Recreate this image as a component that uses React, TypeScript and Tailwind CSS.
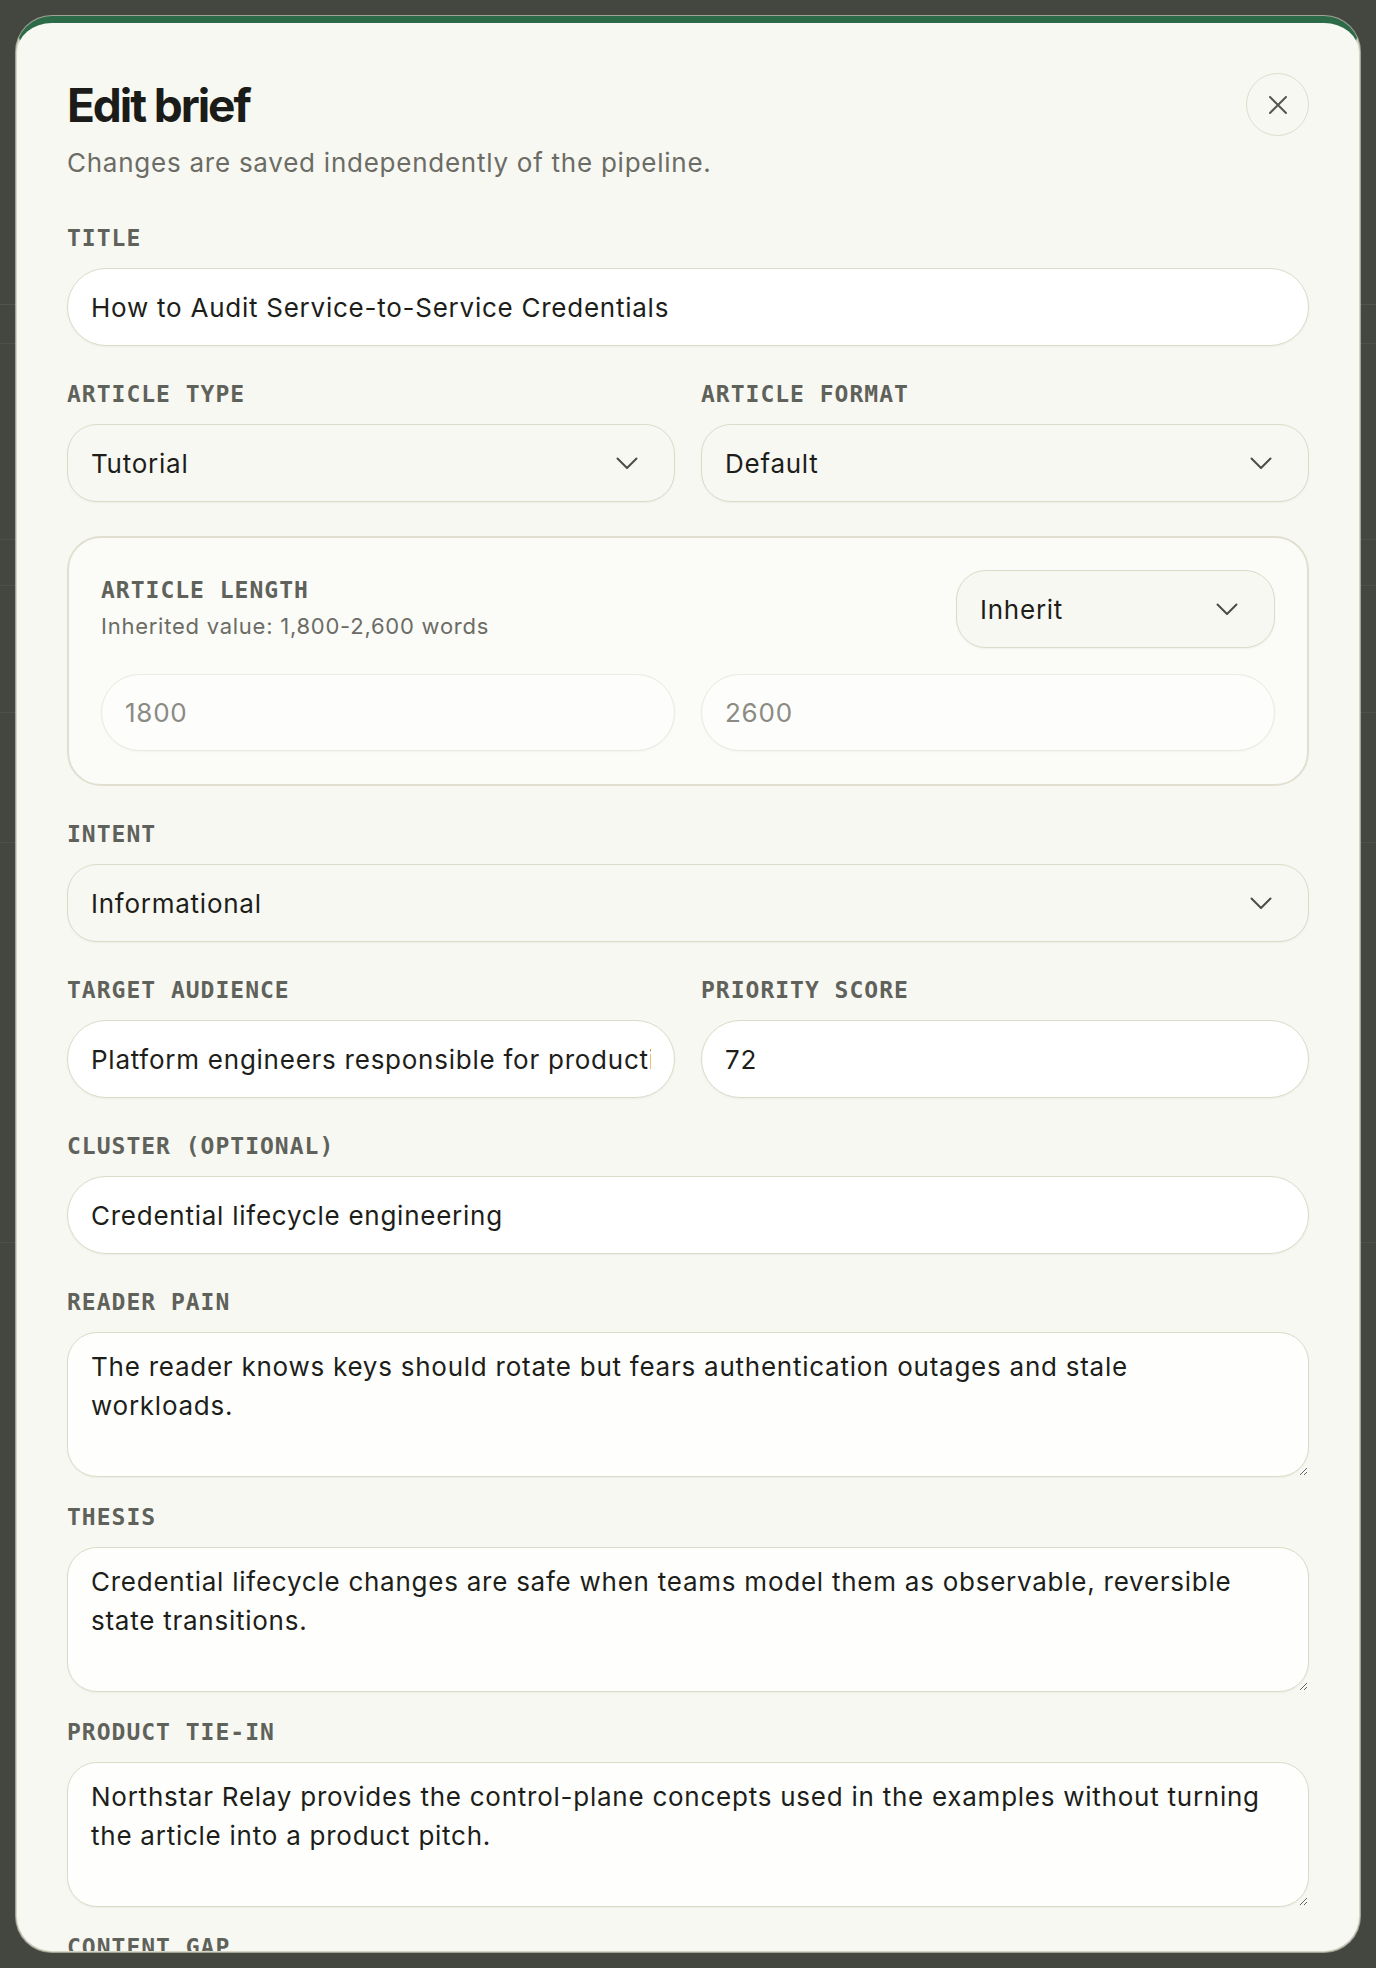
import React, { useState } from 'react';

const sans = "font-['Inter',sans-serif]";
const labelCls =
  "block font-['DejaVu_Sans_Mono',monospace] text-[23px] leading-[28px] font-bold uppercase tracking-[1px] text-[#5f625a]";
const inputCls =
  'h-[78px] w-full rounded-full border-[1.5px] border-[#dcdbc8] bg-white px-[23px] text-[26px] text-[#1d1e1a] shadow-[0_1px_2px_rgba(60,60,40,0.06)] outline-none';
const areaCls =
  'block h-[145px] w-full resize-y rounded-[30px] border-[1.5px] border-[#dcdbc8] bg-[#fefefd] pl-[23px] pr-[36px] pt-[14px] text-[26px] leading-[39px] text-[#1d1e1a] shadow-[0_1px_2px_rgba(60,60,40,0.06)] outline-none';
const rangeCls =
  'h-[77px] w-full rounded-full border-[1.5px] border-[#ebeae0] bg-[#fdfdfb] px-[23px] text-[26px] text-[#1d1e1a] shadow-[0_1px_2px_rgba(60,60,40,0.04)] outline-none placeholder:text-[#8b8b84]';

function Chevron() {
  return (
    <svg width="22" height="13" viewBox="0 0 22 13" fill="none" className="shrink-0">
      <polyline points="1.5,1.5 11,11 20.5,1.5" stroke="#4b4d46" strokeWidth="2" strokeLinecap="round" strokeLinejoin="round" />
    </svg>
  );
}

function Select({ value, className = '' }: { value: string; className?: string }) {
  return (
    <button
      type="button"
      className={`flex h-[78px] items-center justify-between rounded-[30px] border-[1.5px] border-[#dcdbc8] bg-[#f8f8f3] pl-[23px] pr-[36px] text-left text-[26px] text-[#1d1e1a] shadow-[0_1px_2px_rgba(60,60,40,0.06)] ${className}`}
    >
      <span>{value}</span>
      <Chevron />
    </button>
  );
}

function Field({ label, children, className = '' }: { label: string; children: React.ReactNode; className?: string }) {
  return (
    <div className={`flex flex-col gap-[16px] ${className}`}>
      <label className={labelCls}>{label}</label>
      {children}
    </div>
  );
}

export default function App() {
  const [brief, setBrief] = useState({
    title: 'How to Audit Service-to-Service Credentials',
    audience: 'Platform engineers responsible for production service identity',
    priority: '72',
    cluster: 'Credential lifecycle engineering',
    pain: 'The reader knows keys should rotate but fears authentication outages and stale workloads.',
    thesis:
      'Credential lifecycle changes are safe when teams model them as observable, reversible state transitions.',
    tieIn:
      'Northstar Relay provides the control-plane concepts used in the examples without turning the article into a product pitch.',
    gap: 'Most guides stop at rotation schedules and skip dependency mapping between services.'
  });

  const set = (key: keyof typeof brief) => (e: React.ChangeEvent<HTMLInputElement | HTMLTextAreaElement>) =>
    setBrief((prev) => ({ ...prev, [key]: e.target.value }));

  return (
    <div className={`relative min-h-[1968px] overflow-hidden bg-[#44473f] tracking-[0.75px] ${sans}`}>
      {/* page behind the dialog, dimmed */}
      <div className="flex flex-col opacity-60">
        <div className="h-[305px] border-b border-[#5a5d54]" />
        <div className="h-[39px] border-b border-[#55584f]" />
        <div className="h-[196px] border-b border-[#55584f]" />
        <div className="h-[46px] border-b border-[#55584f]" />
        <div className="h-[127px] border-b border-[#55584f]" />
        <div className="h-[130px] border-b border-[#55584f]" />
        <div className="h-[400px] border-b border-[#55584f]" />
      </div>

      <div className="absolute inset-4 overflow-hidden rounded-[36px] border border-t-[7px] border-[#d5d5c4] border-t-[#2d6a47] bg-[#f8f8f3] px-[50px] pt-[50px] shadow-[0_0_0_1px_rgba(225,225,210,0.6)]">
        <div className="flex items-start justify-between">
          <div className="pt-[5px]">
            <h2 className="text-[46px] font-bold leading-[55px] tracking-[-0.045em] text-[#1b1c19]">Edit brief</h2>
            <p className="mt-[10px] text-[26px] leading-[39px] text-[#6b6c65]">
              Changes are saved independently of the pipeline.
            </p>
          </div>
          <button
            type="button"
            className="flex h-[63px] w-[63px] items-center justify-center rounded-full border-[1.5px] border-[#dcdccb]"
          >
            <svg width="20" height="20" viewBox="0 0 20 20" fill="none">
              <path d="M2 2L18 18M18 2L2 18" stroke="#55574f" strokeWidth="2" strokeLinecap="round" />
            </svg>
          </button>
        </div>

        <div className="mt-[42px] flex flex-col gap-[34px]">
          <Field label="Title">
            <input className={inputCls} value={brief.title} onChange={set('title')} />
          </Field>

          <div className="grid grid-cols-2 gap-x-[26px]">
            <Field label="Article type">
              <Select value="Tutorial" className="w-full" />
            </Field>
            <Field label="Article format">
              <Select value="Default" className="w-full" />
            </Field>
          </div>

          <div className="rounded-[34px] border-2 border-[#e0dfd0] bg-[#fbfbf8] px-[32px] pt-[32px] pb-[33px]">
            <div className="flex items-center justify-between">
              <div>
                <div className={labelCls}>Article length</div>
                <p className="mt-[6px] text-[22px] leading-[33px] text-[#6b6c65]">
                  Inherited value: 1,800-2,600 words
                </p>
              </div>
              <Select value="Inherit" className="w-[319px]" />
            </div>
            <div className="mt-[26px] grid grid-cols-2 gap-[26px]">
              <input className={rangeCls} placeholder="1800" disabled />
              <input className={rangeCls} placeholder="2600" disabled />
            </div>
          </div>

          <Field label="Intent">
            <Select value="Informational" className="w-full" />
          </Field>

          <div className="grid grid-cols-2 gap-x-[26px]">
            <Field label="Target audience">
              <input className={inputCls} value={brief.audience} onChange={set('audience')} />
            </Field>
            <Field label="Priority score">
              <input className={inputCls} value={brief.priority} onChange={set('priority')} />
            </Field>
          </div>

          <Field label="Cluster (optional)">
            <input className={inputCls} value={brief.cluster} onChange={set('cluster')} />
          </Field>

          <Field label="Reader pain" className="-mb-2">
            <textarea className={areaCls} value={brief.pain} onChange={set('pain')} />
          </Field>

          <Field label="Thesis" className="-mb-2">
            <textarea className={areaCls} value={brief.thesis} onChange={set('thesis')} />
          </Field>

          <Field label="Product tie-in" className="-mb-2">
            <textarea className={areaCls} value={brief.tieIn} onChange={set('tieIn')} />
          </Field>

          <Field label="Content gap">
            <textarea className={areaCls} value={brief.gap} onChange={set('gap')} />
          </Field>
        </div>
      </div>
    </div>
  );
}
